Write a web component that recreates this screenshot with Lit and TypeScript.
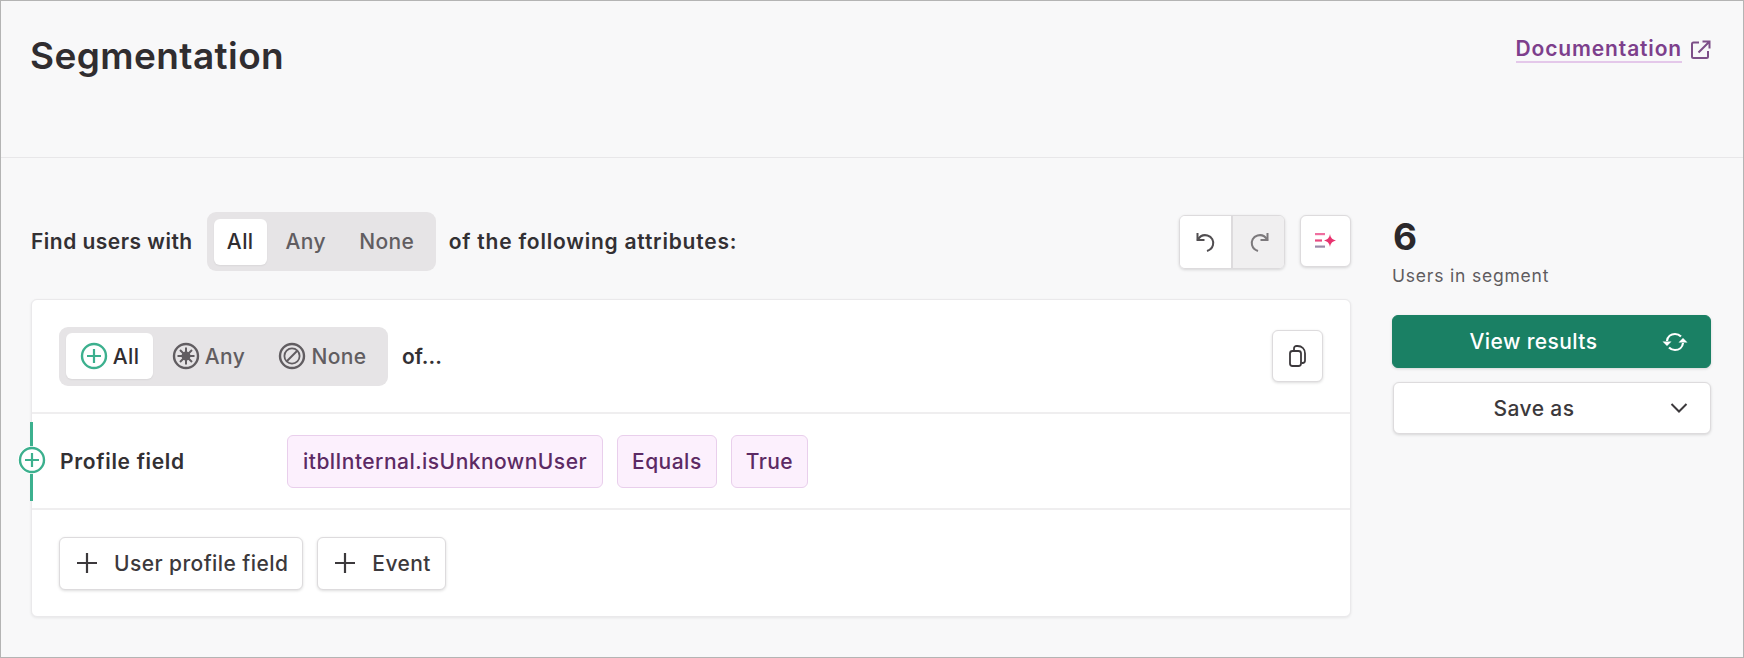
import { LitElement, html, css, svg } from "lit";
import { customElement } from "lit/decorators.js";

const plusCircle = svg`<circle cx="14" cy="14" r="12" fill="none" stroke="currentColor" stroke-width="2.4"/><path d="M14 7v14M7 14h14" fill="none" stroke="currentColor" stroke-width="2.2"/>`;
const anyCircle = svg`<circle cx="14" cy="14" r="12" fill="none" stroke="currentColor" stroke-width="2.4"/><path d="M14 5.5v17M5.5 14h17M8 8l12 12M20 8 8 20" stroke="currentColor" stroke-width="2"/><circle cx="14" cy="14" r="4.5" fill="currentColor"/>`;
const noneCircle = svg`<circle cx="14" cy="14" r="12" fill="none" stroke="currentColor" stroke-width="2.4"/><circle cx="14" cy="14" r="7.6" fill="none" stroke="currentColor" stroke-width="1.8"/><path d="M9 19 19 9" stroke="currentColor" stroke-width="2"/>`;
const plus = svg`<path d="M11 1v20M1 11h20" fill="none" stroke="currentColor" stroke-width="2.2"/>`;

@customElement("app-root")
export class AppRoot extends LitElement {
  static styles = css`
    :host {
      display: block;
      width: 1744px;
      height: 658px;
      box-sizing: border-box;
      border: 1px solid #b4b4b4;
      background: #f8f8f9;
      color: #333033;
      font-family: "Inter", "Noto Sans", sans-serif;
      font-size: 21px;
      overflow: hidden;
    }
    svg { display: block; flex: none; }
    .head {
      height: 157px;
      box-sizing: border-box;
      border-bottom: 1px solid #e8e7e9;
      display: flex;
      justify-content: space-between;
      align-items: flex-start;
      padding: 30px 32px 0 29px;
    }
    h1 {
      margin: 0;
      font-size: 37px;
      line-height: 50px;
      font-weight: 600;
      letter-spacing: 0.4px;
      color: #302d30;
    }
    .doc {
      display: flex;
      align-items: center;
      gap: 9px;
      margin-top: 5px;
      color: #7d3f8c;
      font-size: 21px;
      font-weight: 600;
      letter-spacing: 0.85px;
    }
    .doc span {
      line-height: 25px;
      border-bottom: 2px solid #e4c8ea;
    }
    .body {
      display: grid;
      grid-template-columns: 1320px 320px;
      column-gap: 41px;
      padding: 54px 0 0 30px;
    }
    .bar {
      display: flex;
      align-items: center;
      height: 59px;
      margin-bottom: 28px;
      font-weight: 600;
    }
    .bar > b { font-weight: 600; }
    .find { margin-right: 14px; letter-spacing: 0.48px; }
    .of { margin-left: 13px; letter-spacing: 0.78px; }
    .tools { margin-left: auto; display: flex; gap: 15px; }
    .seg {
      display: flex;
      align-items: center;
      background: #e6e4e6;
      border-radius: 9px;
      padding: 0 7px;
      height: 59px;
      box-sizing: border-box;
      font-weight: 500;
      letter-spacing: 0.4px;
      color: #615d61;
    }
    .seg div {
      display: flex;
      align-items: center;
      justify-content: center;
      height: 46px;
      border-radius: 6px;
      gap: 5px;
    }
    .seg .on {
      background: #fff;
      color: #302d30;
      box-shadow: 0 1px 2px rgba(0, 0, 0, 0.06);
    }
    .top .on { width: 53px; }
    .top .any { width: 78px; }
    .top .none { width: 84px; }
    .inner .on { width: 87px; color: #302d30; }
    .inner .any { width: 111px; }
    .inner .none { width: 117px; }
    .on svg { color: #3cb08e; }
    .btn {
      display: flex;
      align-items: center;
      justify-content: center;
      box-sizing: border-box;
      background: #fff;
      border: 1px solid #dddbdd;
      border-radius: 6px;
      box-shadow: 0 1px 3px rgba(0, 0, 0, 0.14);
      color: #3c393c;
    }
    .square { width: 51px; height: 52px; }
    .group { display: flex; height: 52px; border: 1px solid #dddbdd; border-radius: 6px; box-shadow: 0 1px 3px rgba(0, 0, 0, 0.14); overflow: hidden; }
    .group div { display: flex; align-items: center; justify-content: center; width: 51px; background: #fff; color: #514e51; }
    .group div + div { background: #f0eff0; border-left: 2px solid #dddbdd; color: #7c797c; }
    .card {
      height: 318px;
      box-sizing: border-box;
      background: #fff;
      border: 1px solid #eae9eb;
      border-radius: 6px;
      box-shadow: 0 1px 3px rgba(0, 0, 0, 0.08);
      display: flex;
      flex-direction: column;
    }
    .card-top {
      height: 114px;
      box-sizing: border-box;
      border-bottom: 2px solid #efeeef;
      display: flex;
      align-items: center;
      padding: 0 27px 0 27px;
      font-weight: 600;
    }
    .card-top .ofd { margin-left: 14px; }
    .card-top .btn { margin-left: auto; }
    .row {
      position: relative;
      height: 96px;
      box-sizing: border-box;
      border-bottom: 2px solid #efeeef;
      display: flex;
      align-items: center;
      padding-left: 28px;
    }
    .rail {
      position: absolute;
      left: -2px;
      top: 8px;
      width: 3px;
      height: 79px;
      background: #3cb08e;
    }
    .node {
      position: absolute;
      left: -14px;
      top: 32px;
      width: 28px;
      height: 28px;
      color: #3cb08e;
      background: #fff;
      border-radius: 50%;
    }
    .label { width: 227px; font-weight: 600; letter-spacing: 0.68px; }
    .chips { display: flex; gap: 14px; }
    .chip {
      height: 53px;
      box-sizing: border-box;
      display: flex;
      align-items: center;
      padding: 0 14px;
      background: #fcf0fd;
      border: 1px solid #e9cfec;
      border-radius: 6px;
      color: #5c2a64;
      font-weight: 500;
      letter-spacing: 0.47px;
    }
    .chip.wide { padding: 0 15px; }
    .foot {
      flex: 1;
      display: flex;
      align-items: center;
      gap: 14px;
      padding-left: 27px;
    }
    .add {
      height: 53px;
      gap: 16px;
      padding: 0 14px 0 16px;
      font-weight: 500;
      letter-spacing: 0.42px;
    }
    .count { font-size: 37px; font-weight: 700; line-height: 44px; color: #2b282b; margin: 3px 0 0 1px; }
    .sub { font-size: 17.5px; letter-spacing: 0.8px; line-height: 24px; margin: 5px 0 27px 0; color: #5f5c5f; }
    .action {
      position: relative;
      height: 53px;
      width: 319px;
      padding-right: 36px;
      font-weight: 500;
      letter-spacing: 0.4px;
    }
    .primary { background: #1a8064; border-color: #1a8064; color: #fff; margin-bottom: 14px; }
    .save { height: 52px; width: 318px; margin-left: 1px; }
    .action svg { position: absolute; right: 22px; top: 50%; transform: translateY(-50%); }
  `;

  render() {
    return html`
      <header class="head">
        <h1>Segmentation</h1>
        <a class="doc">
          <span>Documentation</span>
          <svg width="20" height="20" viewBox="0 0 20 20" fill="none" stroke="#7d4f88" stroke-width="2">
            <path d="M8 2.5H2.5a1.5 1.5 0 0 0-1.5 1.5v12.5a1.5 1.5 0 0 0 1.5 1.5h13a1.5 1.5 0 0 0 1.5-1.500V11"/>
            <path d="M7.5 12.500 18 2M11.500 1.500H18.500V8.500"/>
          </svg>
        </a>
      </header>
      <div class="body">
        <main>
          <div class="bar">
            <b class="find">Find users with</b>
            <div class="seg top">
              <div class="on">All</div>
              <div class="any">Any</div>
              <div class="none">None</div>
            </div>
            <b class="of">of the following attributes:</b>
            <div class="tools">
              <div class="group">
                <div>
                  <svg width="24" height="24" viewBox="0 0 24 24" fill="none" stroke="currentColor" stroke-width="2">
                    <path d="M3.5 3v7h7"/>
                    <path d="M3.5 10C6 6 10 4.500 13.500 5.500c4.500 1.300 6.500 5.500 5.500 9.500-.8 3-3 5-6 6"/>
                  </svg>
                </div>
                <div>
                  <svg width="24" height="24" viewBox="0 0 24 24" fill="none" stroke="currentColor" stroke-width="2">
                    <path d="M20.500 3v7h-7"/>
                    <path d="M20.500 10C18 6 14 4.500 10.500 5.500 6 6.800 4 11 5 15c.8 3 3 5 6 6"/>
                  </svg>
                </div>
              </div>
              <div class="btn square">
                <svg width="21" height="15" viewBox="0 0 21 15">
                  <path d="M0 0h10v2.200H0z" fill="#ef6fa0"/>
                  <path d="M0 6.400h7v2.200H0z" fill="#e84a80"/>
                  <path d="M0 12.500h10v2.200H0z" fill="#9b8aa8"/>
                  <path d="M15 1c.6 3.700 2 5.300 6 6.500-4 1.200-5.400 2.800-6 6.500-.6-3.700-2-5.300-6-6.500 4-1.200 5.400-2.800 6-6.500z" fill="#e8336f"/>
                </svg>
              </div>
            </div>
          </div>
          <section class="card">
            <div class="card-top">
              <div class="seg inner">
                <div class="on"><svg width="28" height="28" viewBox="0 0 28 28">${plusCircle}</svg>All</div>
                <div class="any"><svg width="28" height="28" viewBox="0 0 28 28">${anyCircle}</svg>Any</div>
                <div class="none"><svg width="28" height="28" viewBox="0 0 28 28">${noneCircle}</svg>None</div>
              </div>
              <span class="ofd">of...</span>
              <div class="btn square">
                <svg width="22" height="24" viewBox="0 0 22 24" fill="none" stroke="#3c393c" stroke-width="1.800">
                  <rect x="3" y="7" width="11" height="15" rx="2.500"/>
                  <path d="M7 6V4.500A2.500 2.500 0 0 1 9.500 2h1C15 2 18 5 18 9.500v7a2.500 2.500 0 0 1-2.500 2.500H14.500"/>
                </svg>
              </div>
            </div>
            <div class="row">
              <i class="rail"></i>
              <svg class="node" viewBox="0 0 28 28">${plusCircle}</svg>
              <span class="label">Profile field</span>
              <div class="chips">
                <span class="chip wide">itblInternal.isUnknownUser</span>
                <span class="chip">Equals</span>
                <span class="chip">True</span>
              </div>
            </div>
            <div class="foot">
              <div class="btn add">
                <svg width="22" height="22" viewBox="0 0 22 22">${plus}</svg>User profile field
              </div>
              <div class="btn add">
                <svg width="22" height="22" viewBox="0 0 22 22">${plus}</svg>Event
              </div>
            </div>
          </section>
        </main>
        <aside>
          <div class="count">6</div>
          <div class="sub">Users in segment</div>
          <div class="btn action primary">
            View results
            <svg width="26" height="22" viewBox="0 0 26 22" fill="none" stroke="#fff" stroke-width="2.200">
              <path d="M5 10C5.500 5.500 9 3 13 3c2.500 0 4.500 1 6 2.500"/>
              <path d="M21 12c-.5 4.500-4 7-8 7-2.500 0-4.500-1-6-2.500"/>
              <path d="M0.500 10.500h9L5 15z" fill="#fff" stroke="none"/>
              <path d="M25.500 11.500h-9L21 7z" fill="#fff" stroke="none"/>
            </svg>
          </div>
          <div class="btn action save">
            Save as
            <svg width="18" height="11" viewBox="0 0 18 11" fill="none" stroke="#3c393c" stroke-width="2">
              <path d="M1.500 1.500 9 9l7.500-7.500"/>
            </svg>
          </div>
        </aside>
      </div>
    `;
  }
}
